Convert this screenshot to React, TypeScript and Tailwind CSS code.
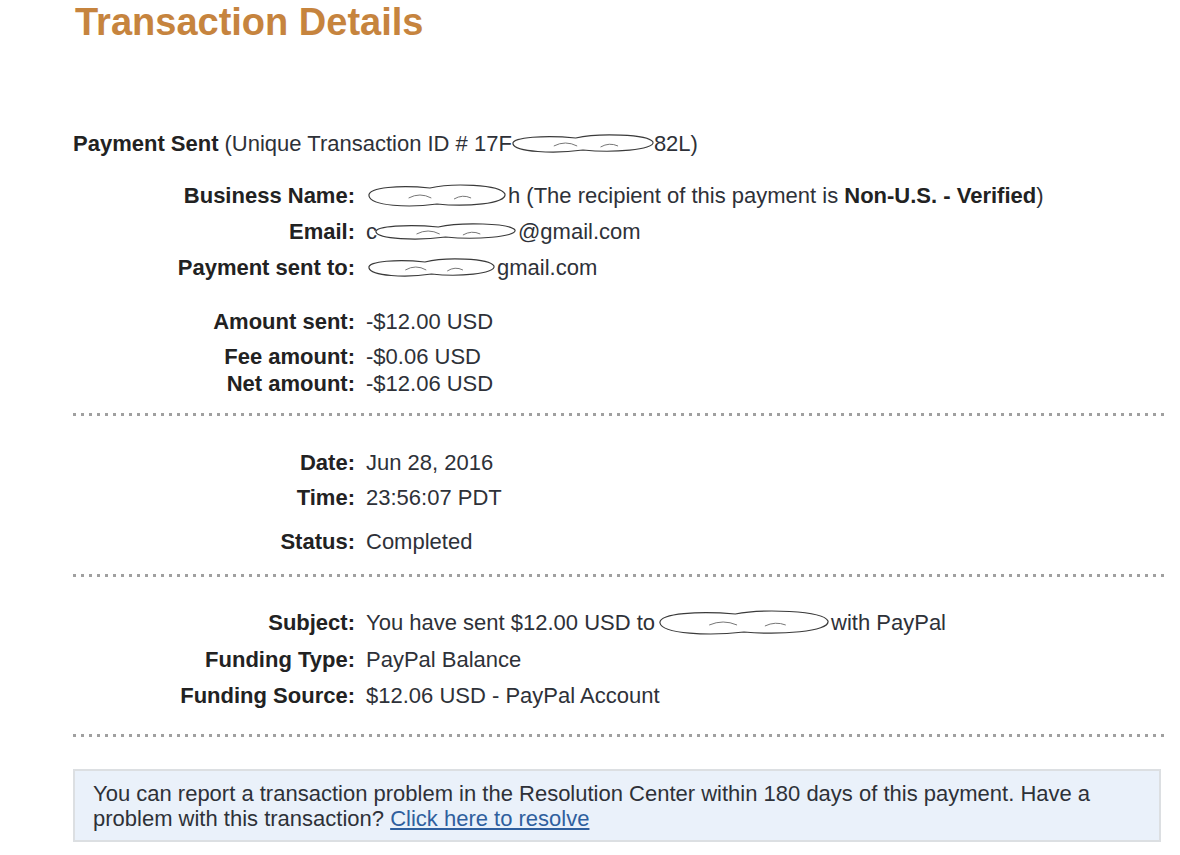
import React from "react"

function Blob({ w, h = 26, className = "" }: { w: number; h?: number; className?: string }) {
  const m = h / 2
  const d = `M3,${m} C1,5 ${w * 0.25},3 ${w * 0.45},6 C${w * 0.6},1 ${w - 8},2 ${w - 3},${m - 2} C${w - 1},${h - 6} ${w * 0.7},${h - 3} ${w * 0.5},${h - 6} C${w * 0.3},${h - 2} 5,${h - 4} 3,${m} Z`
  return (
    <svg width={w} height={h} viewBox={`0 0 ${w} ${h}`} className={`inline-block align-middle ${className}`}>
      <path d={d} fill="#fff" stroke="#3a3a3a" strokeWidth="1.2" />
      <path d={`M${w * 0.3},${m + 2} q${w * 0.08},-6 ${w * 0.16},0 M${w * 0.62},${m + 3} q${w * 0.06},-5 ${w * 0.12},-1`} fill="none" stroke="#777" strokeWidth="1" />
    </svg>
  )
}

function Row({ label, children, mt }: { label: string; children: React.ReactNode; mt: string }) {
  return (
    <div className={`flex h-[26px] items-center leading-[26px] ${mt}`}>
      <div className="w-[282px] shrink-0 text-right font-bold text-[#222]">{label}</div>
      <div className="ml-[11px] flex items-center whitespace-nowrap text-[#2e3138]">{children}</div>
    </div>
  )
}

function Dots({ mt }: { mt: string }) {
  return (
    <div className={`h-[3px] w-[1092px] bg-[linear-gradient(to_right,#a0a0a0_3px,transparent_3px)] bg-[length:8px_3px] ${mt}`} />
  )
}

export default function App() {
  return (
    <div className="min-h-screen bg-white pl-[73px] font-['Liberation_Sans',Arial,sans-serif] text-[22px]">
      <h1 className="pl-[2px] pt-[4px] text-[38px] font-bold leading-[37px] text-[#c6843e]">Transaction Details</h1>

      <div className="mt-[90px] flex h-[26px] items-center whitespace-nowrap leading-[26px] text-[#2e3138]">
        <span className="font-bold text-[#222]">Payment Sent</span>
        <span className="ml-[6px]">(Unique Transaction ID # 17F</span>
        <Blob w={146} h={24} className="-ml-[2px]" />
        <span className="-ml-[2px]">82L)</span>
      </div>

      <Row label="Business Name:" mt="mt-[26px]">
        <Blob w={142} h={28} />
        <span>h (The recipient of this payment is <b className="text-[#222]">Non-U.S. - Verified</b>)</span>
      </Row>
      <Row label="Email:" mt="mt-[10px]">
        <span>c</span>
        <Blob w={145} h={22} className="-ml-[4px]" />
        <span>@gmail.com</span>
      </Row>
      <Row label="Payment sent to:" mt="mt-[10px]">
        <Blob w={131} h={24} />
        <span>gmail.com</span>
      </Row>

      <Row label="Amount sent:" mt="mt-[28px]">-$12.00 USD</Row>
      <Row label="Fee amount:" mt="mt-[9px]">-$0.06 USD</Row>
      <Row label="Net amount:" mt="mt-[1px]">-$12.06 USD</Row>

      <Dots mt="mt-[16px]" />

      <Row label="Date:" mt="mt-[34px]">Jun 28, 2016</Row>
      <Row label="Time:" mt="mt-[9px]">23:56:07 PDT</Row>
      <Row label="Status:" mt="mt-[18px]">Completed</Row>

      <Dots mt="mt-[19px]" />

      <Row label="Subject:" mt="mt-[33px]">
        <span>You have sent $12.00 USD to</span>
        <Blob w={174} h={30} className="ml-[2px]" />
        <span>with PayPal</span>
      </Row>
      <Row label="Funding Type:" mt="mt-[11px]">PayPal Balance</Row>
      <Row label="Funding Source:" mt="mt-[10px]">$12.06 USD - PayPal Account</Row>

      <Dots mt="mt-[25px]" />

      <div className="mt-[32px] w-[1088px] border-2 border-[#dcdfe2] bg-[#eaf1fa] px-[18px] pb-[9px] pt-[10px] text-[22px] leading-[25px] text-[#2e3138]">
        <div>You can report a transaction problem in the Resolution Center within 180 days of this payment. Have a</div>
        <div>
          <span>problem with this transaction? </span>
          <a href="#" className="text-[#2f5f9e] underline">Click here to resolve</a>
        </div>
      </div>
    </div>
  )
}
